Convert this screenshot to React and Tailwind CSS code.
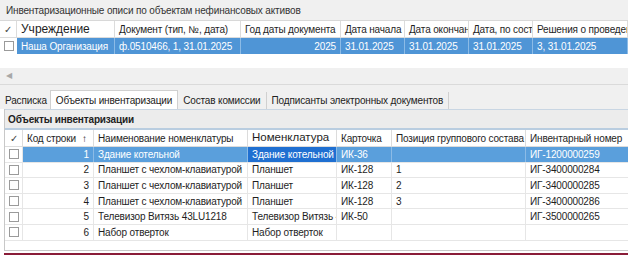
import React from "react";

const topCols = "17px 98px 126px 100px 64px 64px 64px 95px";
const botCols = "18px 71px 154px 89px 55px 134px 103px";

const Box = () => (
  <div className="w-[10px] h-[10px] border border-[#9a9a9a] bg-white" />
);

const topHead = [
  { t: "Учреждение", cls: "text-[12px] tracking-normal" },
  { t: "Документ (тип, №, дата)" },
  { t: "Год даты документа" },
  { t: "Дата начала" },
  { t: "Дата окончания" },
  { t: "Дата, по состоянию" },
  { t: "Решения о проведении" },
];

const topRow = [
  "Наша Организация",
  "ф.0510466, 1, 31.01.2025",
  "2025",
  "31.01.2025",
  "31.01.2025",
  "31.01.2025",
  "3, 31.01.2025",
];

const botHead = [
  "Код строки",
  "Наименование номенклатуры",
  "Номенклатура",
  "Карточка",
  "Позиция группового состава",
  "Инвентарный номер",
];

const rows = [
  ["1", "Здание котельной", "Здание котельной", "ИК-36", "", "ИГ-1200000259"],
  ["2", "Планшет с чехлом-клавиатурой", "Планшет", "ИК-128", "1", "ИГ-3400000284"],
  ["3", "Планшет с чехлом-клавиатурой", "Планшет", "ИК-128", "2", "ИГ-3400000285"],
  ["4", "Планшет с чехлом-клавиатурой", "Планшет", "ИК-128", "3", "ИГ-3400000286"],
  ["5", "Телевизор Витязь 43LU1218", "Телевизор Витязь 43LU1218", "ИК-50", "", "ИГ-3500000265"],
  ["6", "Набор отверток", "Набор отверток", "", "", ""],
];

export default function App() {
  return (
    <div
      className="w-[628px] h-[257px] bg-white overflow-hidden text-[10px] tracking-[-0.15px] text-[#1e1e1e] flex flex-col"
      style={{ fontFamily: "'Liberation Sans', Arial, sans-serif" }}
    >
      {/* title */}
      <div className="h-[21px] bg-[#f0f0f0] border-b border-[#d8d8d8] flex items-center pl-[6px] text-[#333] shrink-0">
        Инвентаризационные описи по объектам нефинансовых активов
      </div>

      {/* top grid */}
      <div className="grid h-[17px] border-b border-[#dcdcdc] shrink-0" style={{ gridTemplateColumns: topCols }}>
        <div className="flex items-center justify-center text-[10px] text-[#444] border-r border-[#dcdcdc]">✓</div>
        {topHead.map((h, i) => (
          <div key={i} className={`flex items-center px-[4px] whitespace-nowrap overflow-hidden border-r border-[#dcdcdc] ${h.cls || ""}`}>
            {h.t}
          </div>
        ))}
      </div>
      <div className="grid h-[16px] shrink-0" style={{ gridTemplateColumns: topCols }}>
        <div className="flex items-center justify-center bg-white">
          <Box />
        </div>
        {topRow.map((c, i) => (
          <div
            key={i}
            className={`flex items-center px-[4px] whitespace-nowrap overflow-hidden bg-[#4f95d6] text-white border-r border-[#8cbbe6] ${i === 2 ? "justify-end" : ""}`}
          >
            {c}
          </div>
        ))}
      </div>

      <div className="h-[14px] shrink-0" />

      {/* horizontal scrollbar */}
      <div className="h-[16px] bg-[#f0f0f0] flex items-center pl-[6px] text-[8px] text-[#a8a8a8] shrink-0">
        ◀
      </div>

      {/* tabs */}
      <div className="h-[25px] bg-[#f0f0f0] border-t border-[#dadada] flex items-end pl-[2px] shrink-0">
        <div className="h-[17px] px-[3px] flex items-center text-[#222]">Расписка</div>
        <div className="h-[19px] px-[5px] flex items-center bg-white border border-b-0 border-[#d0d0d0] text-[#222]">
          Объекты инвентаризации
        </div>
        <div className="h-[17px] px-[5px] flex items-center border-r border-[#d0d0d0] text-[#222]">Состав комиссии</div>
        <div className="h-[17px] px-[5px] flex items-center border-r border-[#d0d0d0] text-[#222]">
          Подписанты электронных документов
        </div>
      </div>

      {/* panel */}
      <div className="flex-1 flex flex-col ml-[4px] border-l border-b border-[#c8c8c8]">
        <div className="h-[21px] bg-[#ececec] border-t border-b-2 border-t-[#c9d6e3] border-b-[#b9cde0] flex items-center pl-[3px] font-bold text-[#222] shrink-0">
          Объекты инвентаризации
        </div>
        <div className="grid h-[17px] border-b border-[#dcdcdc] shrink-0" style={{ gridTemplateColumns: botCols }}>
          <div className="flex items-center justify-center text-[10px] text-[#444] border-r border-[#dcdcdc]">✓</div>
          {botHead.map((h, i) => (
            <div
              key={i}
              className={`flex items-center px-[4px] whitespace-nowrap overflow-hidden border-r border-[#dcdcdc] ${i === 2 ? "text-[11.5px] tracking-normal" : ""}`}
            >
              {h}
              {i === 0 && <span className="ml-[6px] text-[10px]">↑</span>}
            </div>
          ))}
        </div>
        {rows.map((r, ri) => (
          <div
            key={ri}
            className="grid h-[15.6px] border-b border-[#e6e6e6] shrink-0"
            style={{ gridTemplateColumns: botCols }}
          >
            <div className="flex items-center justify-center bg-white border-r border-[#e6e6e6]">
              <Box />
            </div>
            {r.map((c, ci) => {
              const sel = ri === 0;
              const focus = sel && ci === 2;
              return (
                <div
                  key={ci}
                  className={`flex items-center px-[4px] whitespace-nowrap overflow-hidden border-r ${
                    focus
                      ? "bg-[#1f6fd1] text-white border-[#8cbbe6]"
                      : sel
                      ? "bg-[#5a9fdc] text-white border-[#8cbbe6]"
                      : "border-[#e6e6e6]"
                  } ${ci === 0 ? "justify-end" : ""}`}
                >
                  {c}
                </div>
              );
            })}
          </div>
        ))}
        <div className="flex-1" />
      </div>
      <div className="h-[2px] ml-[4px] bg-[#8a1c38] shrink-0 mt-[2px]" />
      <div className="h-[2px] shrink-0" />
    </div>
  );
}
